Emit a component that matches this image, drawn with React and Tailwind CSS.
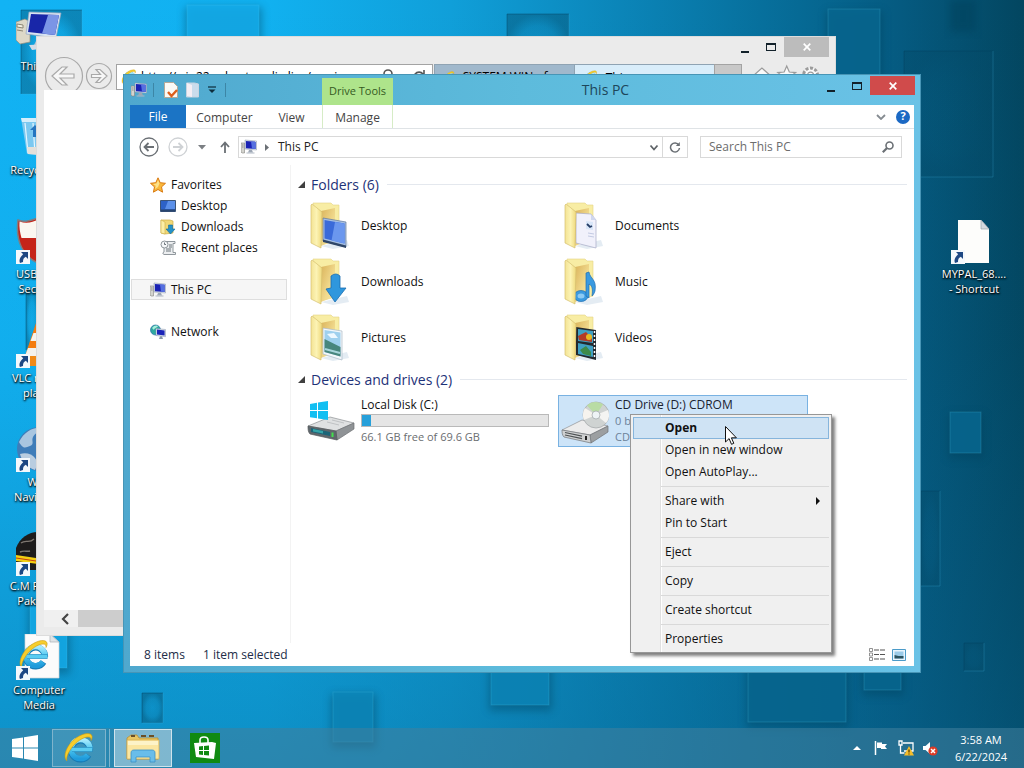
import React, { useState } from "react";

/* ---------- small shared drawings ---------- */

function PcIcon({ className }) {
  return (
    <svg viewBox="0 0 16 16" className={className} aria-hidden="true">
      <path d="M0 4h3.5v10H1L0 13z" fill="#d4d4cf" stroke="#85857f" strokeWidth=".6" />
      <path d="M1 6h1.6M1 8h1.6" stroke="#777" strokeWidth=".7" />
      <path d="M4 1l11.5 1v9L4 10z" fill="#dfe6ee" stroke="#8a97ab" strokeWidth=".5" />
      <path d="M4.9 2l9.7.8v7.3l-9.7-.8z" fill="#1a22b4" />
      <path d="M10 2.4l4.6.4v7.3l-3.6-.3z" fill="#5570e0" />
      <path d="M8 11h3l1 2.5H7z" fill="#9da7b5" />
      <path d="M5.5 13.5h8v1h-8z" fill="#aeb6c2" />
    </svg>
  );
}

function IeLogo({ className }) {
  return (
    <svg viewBox="0 0 32 32" className={className} aria-hidden="true">
      <defs>
        <linearGradient id="ieBlue" x1="0" y1="0" x2="0" y2="1">
          <stop offset="0" stopColor="#a9ebfd" />
          <stop offset=".5" stopColor="#4cc6f0" />
          <stop offset="1" stopColor="#1f9bdb" />
        </linearGradient>
      </defs>
      <path d="M25.5 23A9.500 9.500 0 1 1 27 17.5" fill="none" stroke="#157ab5" strokeWidth="6.4" />
      <path d="M25 23A9.500 9.500 0 1 1 27 17.5" fill="none" stroke="url(#ieBlue)" strokeWidth="5.4" />
      <path d="M9 17.5h20.5" stroke="#157ab5" strokeWidth="4.600" />
      <path d="M9 17.5h20.2" stroke="#5accf1" strokeWidth="3.800" />
      <path
        d="M4 29C-1 25 4 12 13 6 20 1 28 0 29 4c.4 1.500-.2 3-1 4.500.3-2.200-.4-3.500-3-3.500-5 0-12 5-16.500 11C4.500 22 3 26 4 29z"
        fill="#f6cd2c"
        stroke="#c99812"
        strokeWidth=".6"
      />
    </svg>
  );
}

function ShortcutArrow() {
  return (
    <svg viewBox="0 0 14 14" className="absolute bottom-0 left-0 size-[14px]" aria-hidden="true">
      <path d="M0 0h14v14H0z" fill="#f4f8fc" />
      <path d="M5 2h7v7L9.800 6.800C7.500 8 7 9.500 7 12L4 13c-1.500-3 .5-6.500 3.200-8.800z" fill="#1d4783" />
    </svg>
  );
}

function WindowsFlag({ className, fill }) {
  return (
    <svg viewBox="0 0 26 26" className={className} aria-hidden="true">
      <path d="M0 4l11-1.600v10H0zM12 2.200L26 0v12.400H12zM0 13.500h11v10L0 22zM12 13.500h14V26l-14-2.200z" fill={fill} />
    </svg>
  );
}

/* ---------- wallpaper ---------- */

const raised = [
  [187, 5, 72, 60],
  [828, 9, 52, 120],
  [950, 412, 31, 41],
  [333, 692, 40, 50],
  [491, 645, 58, 60],
  [748, 640, 98, 82],
  [864, 650, 37, 40],
  [30, 600, 37, 68],
];

const sunk = [
  [21, 10, 61, 84],
  [507, 14, 62, 60],
  [904, 51, 89, 126],
  [921, 491, 19, 95],
  [142, 693, 21, 30],
  [964, 643, 20, 28],
  [26, 290, 12, 60],
];

function Wallpaper() {
  return (
    <div className="absolute inset-0 bg-[linear-gradient(90deg,#12b3f4_0%,#11b1f0_26%,#109fd9_44%,#0a80b2_64%,#066a95_78%,#055a80_88%,#034660_100%)]">
      <svg viewBox="0 0 1024 768" preserveAspectRatio="none" className="h-full w-full" aria-hidden="true">
        <defs>
          <filter id="soft" x="-20%" y="-20%" width="140%" height="140%">
            <feGaussianBlur stdDeviation="4" />
          </filter>
          <linearGradient id="fall" x1="0" y1="0" x2="0" y2="1">
            <stop offset="0" stopColor="#07618c" stopOpacity="0" />
            <stop offset=".45" stopColor="#07618c" stopOpacity=".06" />
            <stop offset="1" stopColor="#07618c" stopOpacity=".42" />
          </linearGradient>
          <radialGradient id="inner">
            <stop offset="0" stopColor="#044a68" stopOpacity=".04" />
            <stop offset=".6" stopColor="#044a68" stopOpacity=".14" />
            <stop offset="1" stopColor="#044a68" stopOpacity=".42" />
          </radialGradient>
        </defs>
        <path d="M0 0h1024v768H0z" fill="url(#fall)" />
        <path d="M950 0h26v32h-26z" fill="#04405a" opacity=".5" filter="url(#soft)" />
        {raised.map(([x, y, w, h]) => (
          <g key={`${x}-${y}`}>
            <rect x={x - 2} y={y + 2} width={w + 5} height={h + 4} fill="#03415c" opacity=".4" filter="url(#soft)" />
            <rect x={x} y={y} width={w} height={h} fill={x < 300 ? "#14abea" : x < 700 ? "#0c86b8" : "#07668f"} opacity=".85" />
            <rect x={x} y={y} width={w} height={h} fill="none" stroke="#5fd0f6" strokeOpacity=".2" />
          </g>
        ))}
        {sunk.map(([x, y, w, h]) => (
          <g key={`${x}-${y}`}>
            <rect x={x} y={y} width={w} height={h} fill="url(#inner)" />
            <path d={`M${x} ${y + h}V${y}H${x + w}`} fill="none" stroke="#033f5a" strokeOpacity=".4" />
            <path d={`M${x} ${y + h}H${x + w}V${y}`} fill="none" stroke="#4cc3ee" strokeOpacity=".22" />
          </g>
        ))}
      </svg>
    </div>
  );
}

/* ---------- desktop shortcuts ---------- */

function DesktopShortcut({ lines, arrow = true, children }) {
  return (
    <button className="flex h-[104px] w-[76px] flex-col items-center">
      <span className="relative block size-[46px] shrink-0">
        {children}
        {arrow && <ShortcutArrow />}
      </span>
      <span className="mt-[2px] text-[11px] leading-[15px] text-white [text-shadow:0_1px_2px_#000,1px_1px_2px_#000]">
        {lines.map((line) => (
          <span key={line} className="block whitespace-nowrap">
            {line}
          </span>
        ))}
      </span>
    </button>
  );
}

function BigPc() {
  return (
    <svg viewBox="0 0 46 46" className="size-[46px]" aria-hidden="true">
      <path d="M0 12l9-3 5 3v20L4 34l-4-4z" fill="#dcd8c8" stroke="#948f80" strokeWidth=".7" />
      <path d="M1 14l6 1v3l-6-1zM1 20l6 1" stroke="#8b8674" fill="#f4f1e4" />
      <path d="M13 2l32 1-5 25-30-4z" fill="#d7e3f1" stroke="#93a5bd" strokeWidth=".7" />
      <path d="M15 4l28 1-4 20-27-3z" fill="#1826a8" />
      <path d="M32 5l11 0-4 20-13-1.500c2-6 4-12 6-18.500z" fill="#7b95e6" />
      <path d="M22 27l8 1 2 7H18z" fill="#b8c4d2" />
      <path d="M13 35l20-1 5 3-22 3z" fill="#d4dce6" />
    </svg>
  );
}

function RecycleBin() {
  return (
    <svg viewBox="0 0 46 46" className="size-[46px]" aria-hidden="true">
      <path d="M5 4l36 0-6 38-24-2z" fill="#8fcdf0" opacity=".85" />
      <path d="M5 4l36 0-1 4H6z" fill="#d5eefb" />
      <path d="M9 9l3 30M17 9l2 31M26 9l-1 31M35 9l-3 30" stroke="#e6f6ff" strokeWidth="1.200" />
      <path d="M14 16l5-5 5 5h-3v7h-4v-7z" fill="#2575c0" />
      <path d="M11 33h24l-1 9-22-2z" fill="#e3e0da" />
    </svg>
  );
}

function Shield() {
  return (
    <svg viewBox="0 0 46 46" className="size-[46px]" aria-hidden="true">
      <path d="M2 2c8 3 14 0 20-2 6 2 12 5 20 2 3 20-4 36-20 43C8 39-1 24 2 2z" fill="#c52419" stroke="#7e7e82" strokeWidth="1.500" />
      <path d="M3.500 3.500C11 6 17 4 22 1.500V20H5.500C4 15 3 9 3.500 3.500z" fill="#fbf7f0" />
    </svg>
  );
}

function Cone() {
  return (
    <svg viewBox="0 0 46 46" className="size-[46px]" aria-hidden="true">
      <path d="M20 1h6l12 36H8z" fill="#f47c10" />
      <path d="M17.500 11h11l3 8h-17zM12 26h22l3 8H9z" fill="#f4f2ee" />
      <path d="M4 34h38l3 10H1z" fill="#f08a18" />
    </svg>
  );
}

function Globe() {
  return (
    <svg viewBox="0 0 46 46" className="size-[46px]" aria-hidden="true">
      <circle cx="23" cy="23" r="22" fill="#3f7db9" />
      <path d="M3 16C8 6 17 1 25 2c-2 4-6 5-8 9s2 7-3 9-7 3-11-4z" fill="#a9c6e0" />
      <path d="M4 28c6-2 12 0 15 4s2 8 0 12C12 42 6 36 4 28z" fill="#b9cde0" />
    </svg>
  );
}

function PoliceCap() {
  return (
    <svg viewBox="0 0 46 46" className="size-[46px]" aria-hidden="true">
      <path d="M0 18C4 7 14 1 24 2s18 7 20 14v24H0z" fill="#1d1c1c" />
      <path d="M5 13c5-4 8 1 13-4M4 22c4-2 7 0 10-1" stroke="#7d7770" fill="none" strokeWidth="1.400" />
      <path d="M0 25l20 3 24-4v6l-22 4L0 31z" fill="#f4cf12" />
      <path d="M0 28l20 3 24-4" stroke="#c43e12" fill="none" />
    </svg>
  );
}

function PageWithIe() {
  return (
    <span className="relative block size-[46px]">
      <svg viewBox="0 0 46 46" className="size-[46px]" aria-hidden="true">
        <path d="M9 0h25l9 8v36H9z" fill="#fbfbfb" stroke="#cfd4d8" strokeWidth=".7" />
        <path d="M34 0v8h9z" fill="#dfe3e6" stroke="#a9b0b6" strokeWidth=".7" />
      </svg>
      <IeLogo className="absolute top-[5px] left-[2px] size-[32px]" />
    </span>
  );
}

function BlankPage() {
  return (
    <svg viewBox="0 0 46 46" className="size-[46px]" aria-hidden="true">
      <path d="M7 2h23l8 9v34H7z" fill="#fdfdfb" />
      <path d="M30 2v9h8z" fill="#d6dade" stroke="#9aa3ab" strokeWidth=".7" />
    </svg>
  );
}

/* ---------- caption buttons ---------- */

function CaptionButtons({ closeClass }) {
  return (
    <div className="-mr-px flex shrink-0">
      <button aria-label="Minimize" className="flex h-[20px] w-[26px] items-end justify-center pb-[4px]">
        <span className="h-[2px] w-[8px] bg-[#12212a]" />
      </button>
      <button aria-label="Maximize" className="flex h-[19px] w-[26px] items-center justify-center">
        <span className="h-[8px] w-[10px] border border-t-2 border-[#12212a]" />
      </button>
      <button aria-label="Close" className={closeClass}>
        <svg viewBox="0 0 8 8" className="size-[8px]" aria-hidden="true">
          <path d="M.7.7l6.600 6.600M7.300.7L.7 7.300" stroke="#fff" strokeWidth="1.700" />
        </svg>
      </button>
    </div>
  );
}

/* ---------- browser window behind ---------- */

function BrowserWindow() {
  return (
    <section
      aria-label="Internet Explorer"
      className="absolute top-[36px] right-[188px] bottom-[92px] left-[36px] flex flex-col border border-[#dcdcdc] bg-[#ebebeb] px-[7px] pb-[8px]"
    >
      <div className="flex h-[27px] shrink-0 justify-end">
        <CaptionButtons closeClass="flex h-[20px] w-[45px] items-center justify-center bg-[#bcbcbc]" />
      </div>
      <div className="flex h-[26px] shrink-0 text-[12px]">
        <svg viewBox="0 0 72 36" className="-mt-[8px] h-[36px] w-[72px] shrink-0 overflow-hidden" aria-hidden="true">
          <g fill="none" stroke="#a9a9a9" strokeWidth="1.200">
            <circle cx="20" cy="20" r="18.500" />
            <path d="M8 20l10-9h5l-7 7h14v4H16l7 7h-5z" fill="#f7f7f7" />
            <circle cx="55" cy="20" r="12.500" />
            <path d="M63 20l-7-6.500h-4l4.500 5h-9v3h9l-4.500 5h4z" fill="#f7f7f7" />
          </g>
        </svg>
        <div className="flex w-[319px] items-center gap-1 border border-[#a3a3a3] bg-white px-1">
          <IeLogo className="size-[16px] shrink-0" />
          <span className="flex-1 whitespace-nowrap">http://win22.robustmedia.live/services</span>
          <svg viewBox="0 0 50 16" className="h-[16px] w-[50px] shrink-0" fill="none" stroke="#555" strokeWidth="1.600" aria-hidden="true">
            <circle cx="10" cy="5" r="4" />
            <path d="M7 8l-5 6M45 5a5 5 0 1 0 1 4M46 1v5h-5" />
          </svg>
        </div>
        <div className="ml-px flex w-[142px] items-center gap-2 border border-[#8fa3b3] bg-[#a0b8cc] px-2">
          <IeLogo className="size-[12px] shrink-0" />
          <span className="whitespace-nowrap">SYSTEM WIN of</span>
        </div>
        <div className="flex w-[140px] items-center gap-2 border-t border-[#8fa3b3] bg-[#d9edfa] px-2">
          <IeLogo className="size-[15px] shrink-0" />
          <span>This</span>
        </div>
        <div className="w-[28px] border border-[#a3a3a3] bg-[#c8c8c8]" />
        <svg viewBox="0 0 78 26" className="ml-[9px] h-[26px] w-[78px]" fill="#fafafa" stroke="#9b9b9b" strokeWidth="1.200" aria-hidden="true">
          <path d="M2 12l9-8 9 8h-3v8H5v-8z" />
          <path d="M36 2l2.600 6 6.400.5-5 4 1.600 6.500-5.600-3.500L30.400 19l1.600-6.500-5-4 6.400-.5z" />
          <circle cx="60" cy="11" r="7" strokeDasharray="3 1.600" strokeWidth="3" />
          <circle cx="60" cy="11" r="3" />
        </svg>
      </div>
      <div className="flex flex-1 flex-col bg-white">
        <div className="flex-1" />
        <div className="flex h-[17px] bg-[#cdcdcd]">
          <button aria-label="Scroll left" className="flex w-[34px] items-center justify-center bg-[#f0f0f0] pl-2">
            <svg viewBox="0 0 8 12" className="h-[12px] w-[8px]" aria-hidden="true">
              <path d="M7 1L2 6l5 5" fill="none" stroke="#444" strokeWidth="2.200" />
            </svg>
          </button>
        </div>
      </div>
    </section>
  );
}

/* ---------- explorer: folder overlays ---------- */

const overlays = {
  Desktop: (
    <g>
      <path d="M16 16l23 4v25l-23-6z" fill="#a6bfe2" stroke="#5f7598" strokeWidth=".7" />
      <path d="M17.500 18l20 3.500v20l-20-5z" fill="#3a6ad9" />
      <path d="M28 20l9.500 1.500v20l-13-3z" fill="#6b97ee" />
      <path d="M16 37.500l23 6V46l-23-6z" fill="#2f4668" />
    </g>
  ),
  Documents: (
    <g>
      <path d="M15 11l15 1 5 6v28l-20-5z" fill="#f1f1fb" stroke="#a6aac6" strokeWidth=".7" />
      <path d="M30 12v6h5z" fill="#cfd7ef" />
      <path d="M25 19l7 1v8l-7-1z" fill="#d9e6f8" />
      <path d="M26 22l3 3 2-1" stroke="#263d66" strokeWidth="1.800" fill="none" />
      <path d="M27 31l6 1M27 34l6 1" stroke="#c3cae2" />
    </g>
  ),
  Downloads: (
    <path d="M24 18q5-4 9 0v12h6L28 44l-9-13 5-1z" fill="#2f97dd" stroke="#1a6db0" strokeWidth=".8" />
  ),
  Music: (
    <g fill="#3a9ae0" stroke="#1c6db2" strokeWidth=".7">
      <ellipse cx="20" cy="38" rx="7" ry="5.500" />
      <path d="M25 38V15l3-1c1 7 8 7 6 19-1 3-2 4-3 5 1-8 0-10-3-12v14z" />
      <ellipse cx="20" cy="38" rx="3.500" ry="2.500" fill="#8ccaf4" stroke="none" />
    </g>
  ),
  Pictures: (
    <g>
      <path d="M16 14l19 3v29l-19-6z" fill="#f4f8fb" stroke="#a9b9c6" strokeWidth=".7" />
      <path d="M17.500 16l16 2.600v24l-16-4.600z" fill="#9fd0ee" />
      <path d="M17.500 25l6 3 10 5v9.600l-16-4.600z" fill="#48867d" />
      <path d="M20 20l7-1 4 5-7 0z" fill="#eef8ff" />
      <path d="M18 35l15 4" stroke="#a9d6dc" strokeWidth="2" />
    </g>
  ),
  Videos: (
    <g>
      <path d="M15 13l20 3v30l-20-5z" fill="#22292f" />
      <path d="M17 15l15 2v12l-15-2zM17 29l15 3v11l-15-3z" fill="#3fa0c4" />
      <path d="M17 22l8-4 6 6v4l-13-2z" fill="#b33a27" />
      <circle cx="28" cy="23" r="3" fill="#e7b823" />
      <path d="M19 36l6-4 5 6v4l-8-2z" fill="#3d8a4a" />
      <path d="M33.500 17v28" stroke="#fff" strokeWidth="1.500" strokeDasharray="2 2" />
    </g>
  ),
};

function FolderIcon({ kind }) {
  return (
    <svg viewBox="0 0 48 48" className="size-[48px] shrink-0" aria-hidden="true">
      <defs>
        <linearGradient id="folderFront" x1="0" x2="1">
          <stop offset="0" stopColor="#f3e394" />
          <stop offset=".5" stopColor="#fcf3b4" />
          <stop offset="1" stopColor="#efd97c" />
        </linearGradient>
        <linearGradient id="folderInside" x1="0" x2="1" y2="1">
          <stop offset="0" stopColor="#d5a94e" />
          <stop offset=".6" stopColor="#f0d78a" />
          <stop offset="1" stopColor="#f7e9a8" />
        </linearGradient>
      </defs>
      <path d="M14 44l26-6 2 6-16 3z" fill="#d8e4ee" opacity=".7" />
      <path d="M6 1l18 0 2 2h6v35l-18 5z" fill="#f8eda4" stroke="#e4d385" strokeWidth=".6" />
      <path d="M14 9l14-3v32l-14 6z" fill="url(#folderInside)" opacity=".85" />
      {overlays[kind]}
      <path d="M4 3l1-1 10 8-1 36-10-5z" fill="url(#folderFront)" stroke="#d6c070" strokeWidth=".7" />
    </svg>
  );
}

function DiskIcon() {
  return (
    <svg viewBox="0 0 48 48" className="size-[48px] shrink-0" aria-hidden="true">
      <path d="M1 29l22-9 24 6-18 8z" fill="#dfe1e2" stroke="#8d9093" strokeWidth=".7" />
      <path d="M29 34l18-8v6L30 43z" fill="#8f9396" stroke="#6d7073" strokeWidth=".7" />
      <path d="M1 29l28 5 1 9-27-6c-2-2-2-5-2-8z" fill="#5f676c" stroke="#53575a" strokeWidth=".7" />
      <path d="M4 31l19 4v4L4 35z" fill="#1c6578" />
      <path d="M6 32l10 2v2.500l-10-2z" fill="#35a5a8" />
      <path d="M25.500 35.500v4.500" stroke="#43e04c" strokeWidth="2" />
      <path d="M25 23l12 3M20 25l12 3" stroke="#bfc2c4" />
      <path d="M3 7l7-1.200V13H3zM11 5.600L21 4v9H11zM3 14h7v7.200L3 20.200zM11 14h10v9l-10-1.400z" fill="#12bff2" />
    </svg>
  );
}

function CdIcon() {
  return (
    <svg viewBox="0 0 48 48" className="size-[48px] shrink-0" aria-hidden="true">
      <path d="M1 33l20-10 26 6-18 9z" fill="#ececec" stroke="#8f9193" strokeWidth=".7" />
      <circle cx="35" cy="18" r="13" fill="#cfd3d2" stroke="#a2a6a8" strokeWidth=".7" />
      <path d="M35 18L26 8.500c5-5 12-4 16-1z" fill="#b9dca4" />
      <path d="M35 18l12-5c2 5 1 10-2 13z" fill="#f4f4f2" />
      <path d="M35 18L23 23c-2-4-1-9 1-12z" fill="#f6f3ee" />
      <circle cx="35" cy="18" r="4" fill="#eef3f6" stroke="#9ea3a6" strokeWidth=".7" />
      <path d="M29 38l18-9v6L30 46z" fill="#9c9fa1" stroke="#707375" strokeWidth=".7" />
      <path d="M1 33l28 5 1 8-27-6c-2-2-2-5-2-7z" fill="#cfd1d2" stroke="#707375" strokeWidth=".7" />
      <path d="M4 35.500l17 3.700M4 38l17 3.700" stroke="#4d5153" strokeWidth="1.200" />
      <path d="M25 39v4" stroke="#222" strokeWidth="2" />
    </svg>
  );
}

const folders = ["Desktop", "Documents", "Downloads", "Music", "Pictures", "Videos"];

function GroupHeader({ children }) {
  return (
    <h2 className="flex h-[20px] items-center text-[14px] text-[#1e3278]">
      <svg viewBox="0 0 7 7" className="mr-[6px] ml-[7px] size-[7px]" aria-hidden="true">
        <path d="M7 0v7H0z" fill="#404040" />
      </svg>
      {children}
      <span className="ml-2 h-px flex-1 bg-[#e4e8ee]" />
    </h2>
  );
}

/* ---------- explorer: side tree ---------- */

function Star() {
  return (
    <svg viewBox="0 0 16 16" className="size-[16px]" aria-hidden="true">
      <path d="M8 .8l2.200 4.900 5.300.6-4 3.600 1.100 5.300L8 12.500l-4.600 2.700 1.100-5.300-4-3.600 5.300-.6z" fill="#f9b83a" stroke="#d97a12" />
      <path d="M8 3l1.500 3.600L8 10 5 12l.8-3.300L3 7l3.500-.4z" fill="#fde28b" />
    </svg>
  );
}

function TinyDesktop() {
  return (
    <svg viewBox="0 0 16 16" className="size-[16px]" aria-hidden="true">
      <path d="M.5 2.500h15v11H.5z" fill="#2d62c8" stroke="#3c5578" />
      <path d="M8 3h7v8H5z" fill="#5b90ea" />
      <path d="M1 11.500h14v2H1z" fill="#28456e" />
    </svg>
  );
}

function TinyDownloads() {
  return (
    <svg viewBox="0 0 16 16" className="size-[16px]" aria-hidden="true">
      <path d="M1 1l9 0 3 1v12l-8 1-4-1z" fill="#f0d877" stroke="#cfae48" strokeWidth=".7" />
      <path d="M1 1l4 2v12l-4-1z" fill="#fbeea6" stroke="#cfae48" strokeWidth=".6" />
      <path d="M8.500 6h4v4H15l-4.500 5L6 10h2.500z" fill="#2492c8" stroke="#136a9c" strokeWidth=".6" />
    </svg>
  );
}

function TinyRecent() {
  return (
    <svg viewBox="0 0 16 16" className="size-[16px]" aria-hidden="true">
      <path d="M4 1.500h11v2h-2v9h2.500v2H4c-1.500-.5-1.500-2 0-2.500z" fill="#eceef0" stroke="#858c92" strokeWidth=".9" />
      <circle cx="4.500" cy="4.500" r="3.500" fill="#f6f8fa" stroke="#858c92" strokeWidth=".9" />
      <path d="M4.500 2.500v2H6M9 5h3M9 7h3M6 9h5M6 11h5" stroke="#5d666d" fill="none" strokeWidth=".9" />
    </svg>
  );
}

function NetworkIcon() {
  return (
    <svg viewBox="0 0 16 16" className="size-[16px]" aria-hidden="true">
      <circle cx="5.500" cy="6" r="5" fill="#2fa9a0" stroke="#2a6fa8" strokeWidth=".7" />
      <path d="M2 4c2-3 5-3 6-2-1 2-4 2-4 4z" fill="#a8eeda" />
      <path d="M6 4.500l9.500 1v7.200L6 11.500z" fill="#dce4ee" stroke="#8693a8" strokeWidth=".5" />
      <path d="M7 5.600l7.600.8v5.200L7 10.600z" fill="#1b24b8" />
      <path d="M10 12.300h2l1 2.700H9z" fill="#8a98aa" />
    </svg>
  );
}

function TreeItem({ icon, label, nested, current }) {
  return (
    <li className={current ? "mr-[3px] ml-px border border-[#dedede] bg-[#f6f6f6]" : "mr-[3px] ml-px border border-transparent"}>
      <a
        href="#"
        aria-current={current ? "page" : undefined}
        className={nested ? "flex h-[19px] items-center gap-[5px] pl-[28px]" : "flex h-[19px] items-center gap-[5px] pl-[18px]"}
      >
        {icon}
        <span>{label}</span>
      </a>
    </li>
  );
}

function NavTree() {
  return (
    <nav className="w-[161px] shrink-0 border-r border-[#f3f3f3] pt-[9px] text-[12px] text-[#111]">
      <ul>
        <TreeItem icon={<Star />} label="Favorites" />
        <TreeItem nested icon={<TinyDesktop />} label="Desktop" />
        <TreeItem nested icon={<TinyDownloads />} label="Downloads" />
        <TreeItem nested icon={<TinyRecent />} label="Recent places" />
      </ul>
      <ul className="mt-[21px]">
        <TreeItem current icon={<PcIcon className="size-[16px]" />} label="This PC" />
      </ul>
      <ul className="mt-[21px]">
        <TreeItem icon={<NetworkIcon />} label="Network" />
      </ul>
    </nav>
  );
}

/* ---------- explorer: bars ---------- */

function TitleBar() {
  return (
    <header className="flex h-[30px] shrink-0 pl-[1px]">
      <div className="flex w-[191px] items-center">
        <PcIcon className="size-[16px]" />
        <span className="ml-[6px] h-[14px] w-px bg-[#3c86a6]" />
        <button aria-label="Properties" className="ml-[10px]">
          <svg viewBox="0 0 14 16" className="h-[16px] w-[14px]" aria-hidden="true">
            <path d="M.5.500h9l4 4v11H.5z" fill="#fbfaf6" stroke="#b6a997" />
            <path d="M4 10l3.500 4L13 8" fill="none" stroke="#dd5f1c" strokeWidth="2.400" />
          </svg>
        </button>
        <button aria-label="New folder" className="ml-[8px]">
          <svg viewBox="0 0 13 16" className="h-[16px] w-[13px]" aria-hidden="true">
            <path d="M.5 1h8l4 1v13H.5z" fill="#c9dcec" stroke="#c8d4e0" />
            <path d="M1 1l5 2v12l-5-1z" fill="#f4eef4" />
          </svg>
        </button>
        <button aria-label="Customize toolbar" className="ml-[9px]">
          <svg viewBox="0 0 8 8" className="size-[8px]" aria-hidden="true">
            <path d="M0 1h8" stroke="#0c2c3c" strokeWidth="1.200" />
            <path d="M.5 3.500h7L4 7z" fill="#0c2c3c" />
          </svg>
        </button>
        <span className="ml-[9px] h-[14px] w-px bg-[#3c86a6]" />
      </div>
      <div className="mt-[3px] flex w-[71px] items-center justify-center bg-[#aee48b] text-[11px] text-[#35591f]">
        Drive Tools
      </div>
      <h1 className="flex-1 text-center text-[14px] leading-[30px] text-[#1d465a]">This PC</h1>
      <div className="pt-px">
        <CaptionButtons closeClass="flex h-[19px] w-[45px] items-center justify-center bg-[#d04b4b]" />
      </div>
    </header>
  );
}

function RibbonTabs() {
  return (
    <div className="flex h-[24px] shrink-0 border-b border-[#dfe3e6] bg-white text-[12px] text-[#444]">
      <button className="w-[56px] bg-[#1b74c5] text-white">File</button>
      <button className="w-[77px] pt-[2px]">Computer</button>
      <button className="w-[57px] pt-[2px]">View</button>
      <button className="ml-[2px] w-[71px] border-x border-[#d6ecc6] pt-[2px]">Manage</button>
      <div className="ml-auto flex items-center gap-[10px] pr-[4px]">
        <button aria-label="Expand ribbon">
          <svg viewBox="0 0 10 6" className="h-[6px] w-[10px]" aria-hidden="true">
            <path d="M1 1l4 4 4-4" fill="none" stroke="#858b91" strokeWidth="1.800" />
          </svg>
        </button>
        <button aria-label="Help" className="flex size-[14px] items-center justify-center rounded-full bg-[#1b69c4] text-[11px] font-bold text-white">
          ?
        </button>
      </div>
    </div>
  );
}

function AddressBar() {
  const [query, setQuery] = useState("");
  return (
    <div className="flex h-[36px] shrink-0 items-center bg-white pr-[12px] pl-[9px] text-[12px] text-[#222]">
      <button aria-label="Back">
        <svg viewBox="0 0 20 20" className="size-[20px]" fill="none" stroke="#6b7075" aria-hidden="true">
          <circle cx="10" cy="10" r="9" strokeWidth="1.300" />
          <path d="M15 10H6M9.500 6L5.500 10l4 4" strokeWidth="1.800" />
        </svg>
      </button>
      <button aria-label="Forward" className="ml-[9px]">
        <svg viewBox="0 0 20 20" className="size-[20px]" fill="none" stroke="#cfd2d5" aria-hidden="true">
          <circle cx="10" cy="10" r="9" strokeWidth="1.300" />
          <path d="M5 10h9M10.500 6l4 4-4 4" strokeWidth="1.800" />
        </svg>
      </button>
      <button aria-label="Recent locations" className="ml-[10px]">
        <svg viewBox="0 0 8 5" className="h-[5px] w-[8px]" aria-hidden="true">
          <path d="M0 0h8L4 4.500z" fill="#7b7f83" />
        </svg>
      </button>
      <button aria-label="Up" className="ml-[13px]">
        <svg viewBox="0 0 12 12" className="size-[12px]" aria-hidden="true">
          <path d="M6 12V2M2 6l4-4.500L10 6" fill="none" stroke="#6b7075" strokeWidth="1.800" />
        </svg>
      </button>
      <div className="ml-[7px] flex h-[22px] flex-1 items-center border border-[#d9d9d9]">
        <PcIcon className="ml-[2px] size-[16px]" />
        <svg viewBox="0 0 4 7" className="ml-[8px] h-[7px] w-[4px]" aria-hidden="true">
          <path d="M0 0l4 3.500L0 7z" fill="#6b7075" />
        </svg>
        <span className="ml-[9px] flex-1">This PC</span>
        <button aria-label="Previous locations" className="mr-[3px]">
          <svg viewBox="0 0 10 7" className="h-[7px] w-[10px]" aria-hidden="true">
            <path d="M1.500 1.500L5 5.500l3.500-4" fill="none" stroke="#5e6367" strokeWidth="1.800" />
          </svg>
        </button>
        <button aria-label="Refresh" className="flex h-full w-[25px] items-center justify-center border-l border-[#d9d9d9]">
          <svg viewBox="0 0 12 12" className="size-[12px]" aria-hidden="true">
            <path d="M9.800 4A4.500 4.500 0 1 0 10.500 7" fill="none" stroke="#6b7075" strokeWidth="1.500" />
            <path d="M10.800 1v4H6.800z" fill="#6b7075" />
          </svg>
        </button>
      </div>
      <label className="ml-[12px] flex h-[22px] w-[202px] items-center border border-[#d9d9d9] pr-[7px] pl-[8px]">
        <input
          type="text"
          aria-label="Search This PC"
          placeholder="Search This PC"
          value={query}
          onChange={(e) => setQuery(e.target.value)}
          className="min-w-0 flex-1 outline-none placeholder:text-[#6d6d6d]"
        />
        <svg viewBox="0 0 12 12" className="size-[12px]" fill="none" stroke="#6b7075" aria-hidden="true">
          <circle cx="7.500" cy="4.500" r="3.500" strokeWidth="1.600" />
          <path d="M5 7L.8 11.200" strokeWidth="2.200" />
        </svg>
      </label>
    </div>
  );
}

function StatusBar() {
  return (
    <footer className="flex h-[23px] shrink-0 items-center bg-white px-[14px] text-[12px] text-[#222d48]">
      <span className="w-[59px]">8 items</span>
      <span>1 item selected</span>
      <button aria-label="Details view" className="ml-auto">
        <svg viewBox="0 0 16 13" className="h-[13px] w-[16px]" aria-hidden="true">
          <path d="M.5.500h3v3h-3zM.5 5h3v3h-3zM.5 9.500h3v3h-3z" fill="#fff" stroke="#777" strokeWidth=".8" />
          <path d="M5 2h5M11 2h5M5 6.500h5M11 6.500h5M5 11h5M11 11h5" stroke="#555" strokeWidth="1.200" />
        </svg>
      </button>
      <button aria-label="Large icons view" className="-mr-[6px] ml-[7px]">
        <svg viewBox="0 0 14 12" className="h-[12px] w-[14px]" aria-hidden="true">
          <path d="M.5.500h13v11H.5z" fill="#e9f6ff" stroke="#4b9bc9" />
          <path d="M2.500 2.500h9v7h-9z" fill="#9bcbe8" />
          <path d="M2.500 6l4 1 5 0v2.500h-9z" fill="#2b5360" />
        </svg>
      </button>
    </footer>
  );
}

function ExplorerWindow() {
  return (
    <section
      aria-label="This PC"
      className="absolute top-[74px] right-[103px] bottom-[55px] left-[123px] flex flex-col border border-[#4795b6] bg-linear-to-r from-[#4fa8ce] via-[#5dbbdc] to-[#6ac2e6] px-[6px] pb-[6px]"
    >
      <TitleBar />
      <RibbonTabs />
      <AddressBar />
      <div className="flex min-h-0 flex-1 bg-white">
        <NavTree />
        <main className="min-w-0 flex-1 pt-[9px] pr-[7px] text-[12px] text-[#111]">
          <GroupHeader>Folders (6)</GroupHeader>
          <div className="mt-[6px] ml-[13px] grid grid-cols-[repeat(auto-fill,250px)] gap-1">
            {folders.map((name) => (
              <a key={name} href="#" className="flex h-[52px] items-center gap-[6px] pl-[3px]">
                <FolderIcon kind={name} />
                <span>{name}</span>
              </a>
            ))}
          </div>
          <div className="h-[5px]" />
          <GroupHeader>Devices and drives (2)</GroupHeader>
          <div className="mt-[6px] ml-[13px] grid grid-cols-[repeat(auto-fill,250px)] gap-1 leading-[16px]">
            <a href="#" className="flex h-[52px] items-center gap-[6px] pl-[3px]">
              <DiskIcon />
              <span className="block text-[#6a6d70]">
                <span className="block text-[#111]">Local Disk (C:)</span>
                <span className="mt-px mb-[2px] block h-[13px] w-[188px] border border-[#b9b9b9] bg-[#e5e5e5]">
                  <span className="block h-full w-[9px] bg-[#27a0da]" />
                </span>
                <span className="block text-[11px]">66.1 GB free of 69.6 GB</span>
              </span>
            </a>
            <a href="#" className="flex h-[52px] items-center gap-[6px] border border-[#79b2e2] bg-[#cde4f8] pl-[2px]">
              <CdIcon />
              <span className="block text-[#6c8299]">
                <span className="block text-[#1a2330]">CD Drive (D:) CDROM</span>
                <span className="block text-[11px]">0 bytes free of 0 bytes</span>
                <span className="block text-[11px]">CDFS</span>
              </span>
            </a>
          </div>
        </main>
      </div>
      <StatusBar />
    </section>
  );
}

/* ---------- context menu ---------- */

const menuGroups = [
  ["Open", "Open in new window", "Open AutoPlay..."],
  ["Share with", "Pin to Start"],
  ["Eject"],
  ["Copy"],
  ["Create shortcut"],
  ["Properties"],
];

function ContextMenu() {
  return (
    <div
      role="menu"
      className="absolute top-[414px] left-[630px] w-[202px] border border-[#979797] bg-[#f0f0f0] bg-[linear-gradient(90deg,transparent_29px,#e0e0e0_29px,#e0e0e0_30px,#fff_30px,#fff_31px,transparent_31px)] p-[2px] text-[12px] text-[#111] shadow-[3px_3px_3px_rgba(0,0,0,0.5)]"
    >
      {menuGroups.map((group, g) => (
        <div key={group[0]}>
          {g > 0 && <div role="separator" className="my-[3px] ml-[28px] h-px bg-[#d9d9d9]" />}
          {group.map((item) => (
            <button
              key={item}
              role="menuitem"
              className={
                item === "Open"
                  ? "flex h-[22px] w-full items-center border border-[#86b5dc] bg-[#cfe3f4] pr-[8px] pl-[31px] font-bold"
                  : "flex h-[22px] w-full items-center pr-[9px] pl-[32px]"
              }
            >
              {item}
              {item === "Share with" && (
                <svg viewBox="0 0 4 8" className="ml-auto h-[8px] w-[4px]" aria-hidden="true">
                  <path d="M0 0l4 4-4 4z" fill="#111" />
                </svg>
              )}
            </button>
          ))}
        </div>
      ))}
    </div>
  );
}

/* ---------- taskbar ---------- */

function Taskbar() {
  return (
    <footer className="relative flex h-[40px] shrink-0 items-center bg-[#417f9c]/55 text-[11px] text-white">
      <button aria-label="Start" className="flex w-[50px] justify-center">
        <WindowsFlag className="size-[26px]" fill="#fff" />
      </button>
      <button
        aria-label="Internet Explorer"
        className="ml-[2px] flex h-[38px] w-[54px] items-center justify-center border border-[#7fb4cc] bg-white/10"
      >
        <IeLogo className="size-[32px]" />
      </button>
      <span className="ml-[1px] h-[38px] w-[3px] border-r border-[#7fb4cc]" />
      <button
        aria-label="File Explorer"
        className="ml-[4px] flex h-[38px] w-[58px] items-center justify-center border border-[#cfe3ec] bg-white/40"
      >
        <svg viewBox="0 0 34 30" className="h-[30px] w-[34px]" aria-hidden="true">
          <path d="M1 5l4-3h6l2 3h19v21H1z" fill="#e8c562" stroke="#b98f33" strokeWidth=".8" />
          <path d="M5 2h4v2H5zM15 2h5v2h-5zM23 2h5v2h-5z" fill="#6a4f27" />
          <path d="M1 7h32v19H1z" fill="#fbe6a0" stroke="#d5ad50" strokeWidth=".7" />
          <path d="M2 8h30v4H2z" fill="#fdf3c8" />
          <path d="M5 29V20c0-2 1-3 3-3h18c2 0 3 1 3 3v9h-5v-5H10v5z" fill="#69bdea" stroke="#3b8fc7" strokeWidth=".8" />
        </svg>
      </button>
      <button aria-label="Store" className="ml-[18px] flex size-[30px] items-center justify-center bg-[#108a12]">
        <svg viewBox="0 0 22 24" className="h-[24px] w-[22px]" aria-hidden="true">
          <path d="M6 7V4q0-3 4-3t4 3v3" fill="none" stroke="#fff" strokeWidth="1.600" />
          <path d="M0 7l18-1 4 1-2 16L2 21z" fill="#fff" />
          <path d="M5 10.500l4-.5v4H5zM10 10l5-.6V14h-5zM5 15h4v4l-4-.5zM10 15h5v4.600l-5-.6z" fill="#108a12" />
        </svg>
      </button>
      <div className="ml-auto flex items-center">
        <button aria-label="Show hidden icons">
          <svg viewBox="0 0 8 4" className="h-[4px] w-[8px]" aria-hidden="true">
            <path d="M0 4l4-4 4 4z" fill="#fff" />
          </svg>
        </button>
        <svg viewBox="0 0 16 16" className="ml-[12px] size-[16px]" role="img" aria-label="Action Center">
          <path d="M2.500 1v14" stroke="#fff" strokeWidth="1.500" />
          <path d="M4 2.500h5v1.500h5l-2 2.500L14 9H8V8H4z" fill="#fff" />
        </svg>
        <svg viewBox="0 0 16 16" className="ml-[9px] size-[16px]" role="img" aria-label="Network">
          <path d="M5 3h10v8H6M1 1h3v4H1zM2.500 5v8h4" fill="none" stroke="#fff" strokeWidth="1.300" />
          <path d="M11 6l5 9.500H6z" fill="#f6bd2b" />
          <path d="M11 9.500v3M11 13.500v1" stroke="#443000" strokeWidth="1.200" />
        </svg>
        <svg viewBox="0 0 16 16" className="ml-[8px] size-[16px]" role="img" aria-label="Volume muted">
          <path d="M1 6h2.500L8 2v12l-4.500-4H1z" fill="#fff" />
          <circle cx="11" cy="11" r="4.600" fill="#dd3b26" />
          <path d="M9 9l4 4M13 9l-4 4" stroke="#fff" strokeWidth="1.500" />
        </svg>
        <time className="w-[86px] text-center leading-[17px]">
          3:58 AM
          <br />
          6/22/2024
        </time>
      </div>
    </footer>
  );
}

export default function App() {
  return (
    <div className="relative flex h-screen flex-col overflow-hidden font-['Open_Sans','Noto_Sans',sans-serif]">
      <Wallpaper />
      <div className="relative min-h-0 flex-1">
        <div className="absolute top-[10px] left-[1px] flex flex-col">
          <DesktopShortcut lines={["This PC"]} arrow={false}>
            <BigPc />
          </DesktopShortcut>
          <DesktopShortcut lines={["Recycle Bin"]} arrow={false}>
            <RecycleBin />
          </DesktopShortcut>
          <DesktopShortcut lines={["USB Disk", "Security"]}>
            <Shield />
          </DesktopShortcut>
          <DesktopShortcut lines={["VLC media", "player"]}>
            <Cone />
          </DesktopShortcut>
          <DesktopShortcut lines={["Web", "Navigator"]}>
            <Globe />
          </DesktopShortcut>
          <DesktopShortcut lines={["C.M Punjab", "Pakistan"]}>
            <PoliceCap />
          </DesktopShortcut>
          <DesktopShortcut lines={["Computer", "Media"]}>
            <PageWithIe />
          </DesktopShortcut>
        </div>
        <div className="absolute top-[218px] right-[12px]">
          <DesktopShortcut lines={["MYPAL_68....", "- Shortcut"]}>
            <BlankPage />
          </DesktopShortcut>
        </div>

        <BrowserWindow />
        <ExplorerWindow />
        <ContextMenu />

        <svg viewBox="0 0 12 19" className="pointer-events-none absolute top-[426px] left-[725px] h-[19px] w-[12px]" aria-hidden="true">
          <path d="M.5.500v15.500l3.600-3.400 2.400 5.700 2.300-1-2.400-5.500h5z" fill="#fff" stroke="#111" />
        </svg>
      </div>
      <Taskbar />
    </div>
  );
}
